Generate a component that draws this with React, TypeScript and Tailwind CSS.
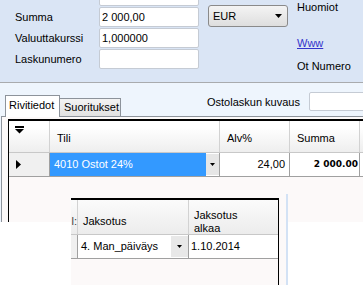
import React from "react";

const rows = [
    { label: "", value: "" },
    { label: "Summa", value: "2 000,00" },
    { label: "Valuuttakurssi", value: "1,000000" },
    { label: "Laskunumero", value: "" },
];

const DownArrow: React.FC<{ className?: string }> = ({ className }) => (
    <svg width="7" height="4" viewBox="0 0 7 4" className={className}>
        <path d="M0 0h7L3.5 4z" fill="#000" />
    </svg>
);

const App: React.FC = () => {
    return (
        <div className="relative w-[363px] h-[285px] overflow-hidden bg-white text-[11px] leading-[13px] text-black font-['Liberation_Sans',Arial,sans-serif]">
            {/* header form */}
            <div className="h-[83px] bg-[#dae5f5] border-b border-[#a9abae] flex overflow-hidden">
                <div className="flex flex-col gap-[1px] -mt-[14px]">
                    {rows.map((r, i) => (
                        <div key={i} className="flex items-center h-[20px]">
                            <span className="w-[99px] pl-[15px]">{r.label}</span>
                            <div className="w-[100px] h-[20px] bg-white border border-[#c5cbd4] rounded-[2px] pl-[2px] flex items-center">
                                {r.value}
                            </div>
                        </div>
                    ))}
                </div>
                <div className="ml-[9px] mt-[5px] w-[80px] h-[22px] rounded-[3px] border border-[#8a8a8a] bg-gradient-to-b from-[#f4f4f4] to-[#dedede] flex items-center justify-between pl-[4px] pr-[5px]">
                    <span>EUR</span>
                    <DownArrow />
                </div>
                <div className="ml-[9px] flex flex-col pt-[1px]">
                    <span>Huomiot</span>
                    <span className="mt-[23px] text-[#3333cc] underline">Www</span>
                    <span className="mt-[10px]">Ot Numero</span>
                </div>
            </div>

            {/* tabs + grid */}
            <div className="h-[139px] bg-[#eef5fd] overflow-hidden flex flex-col">
                <div className="h-[33px] flex shrink-0">
                    <div className="flex items-end pl-[5px]">
                        <div className="relative z-10 -mb-[1px] w-[55px] h-[22px] bg-white border-t border-l border-r border-[#8d939b] pl-[3px] pt-[3px]">
                            Rivitiedot
                        </div>
                        <div className="w-[61px] h-[18px] bg-gradient-to-b from-[#f3f3f3] to-[#e2e2e2] border-t border-r border-[#8d939b] pl-[4px] pt-[2px]">
                            Suoritukset
                        </div>
                    </div>
                    <div className="ml-[86px] mt-[9px] h-[19px] flex items-center">
                        <span className="w-[102px] pt-[2px]">Ostolaskun kuvaus</span>
                        <div className="w-[60px] h-[19px] bg-white border border-[#c5cbd4] rounded-[2px]" />
                    </div>
                </div>
                <div className="flex-1 ml-[1px] border-t border-l border-[#8d939b] bg-[#fcf9f9] pl-[6px] pt-[2px]">
                    <div className="h-full border-l border-t-2 border-black bg-[#fcf9f9]">
                        <div className="h-[32px] flex border-b border-[#c8c8c8] bg-gradient-to-b from-white from-20% to-[#eeeeee]">
                            <div className="w-[41px] border-r border-[#d2d2d2] pl-[6px] pt-[5px]">
                                <svg width="10" height="8" viewBox="0 0 10 8">
                                    <rect x="0" y="0" width="9" height="2" fill="#000" />
                                    <path d="M0 3h9L4.5 7.5z" fill="#000" />
                                </svg>
                            </div>
                            <div className="w-[170px] border-r border-[#d2d2d2] pl-[7px] flex items-end pb-[7px]">Tili</div>
                            <div className="w-[70px] border-r border-[#d2d2d2] pl-[7px] flex items-end pb-[7px]">Alv%</div>
                            <div className="w-[70px] border-r border-[#d2d2d2] pl-[7px] flex items-end pb-[7px]">Summa</div>
                            <div className="flex-1" />
                        </div>
                        <div className="h-[24px] flex border-b border-[#a0a0a0] bg-white">
                            <div className="w-[41px] border-r border-[#a0a0a0] bg-[#f0f0f0] pl-[7px] flex items-center">
                                <svg width="5" height="9" viewBox="0 0 5 9">
                                    <path d="M0 0l5 4.5L0 9z" fill="#000" />
                                </svg>
                            </div>
                            <div className="w-[170px] border-r border-[#a0a0a0] flex">
                                <div className="flex-1 bg-[#3399ff] text-white pl-[4px] flex items-center">4010 Ostot 24%</div>
                                <div className="w-[13px] my-[1px] bg-[#e6e6e6] flex items-center justify-center">
                                    <DownArrow className="w-[5px] h-[3px]" />
                                </div>
                            </div>
                            <div className="w-[70px] border-r border-[#a0a0a0] pr-[4px] flex items-center justify-end">24,00</div>
                            <div className="w-[70px] border-r border-[#a0a0a0] pr-[1px] flex items-center justify-end font-['DejaVu_Sans',sans-serif] font-bold text-[9px]">
                                2 000.00
                            </div>
                            <div className="flex-1" />
                        </div>
                    </div>
                </div>
            </div>

            {/* floating sub grid window */}
            <div className="absolute left-[71px] top-[194px] w-[217px] h-[91px] bg-[#fcf9f9] border-r-2 border-[#d3e2f5] pt-[4px]">
                <div className="w-[208px] h-full border-t-2 border-r border-black">
                    <div className="h-[35px] flex border-b border-[#c8c8c8] bg-gradient-to-b from-[#fbfbfb] to-[#ececec]">
                        <div className="w-[7px] border-r border-[#d2d2d2] overflow-hidden flex items-center justify-end pt-[9px] text-[#444]">l:</div>
                        <div className="w-[111px] border-r border-[#d2d2d2] pl-[5px] flex items-center pt-[9px]">Jaksotus</div>
                        <div className="flex-1 pl-[5px] flex items-center pt-[9px]">
                            Jaksotus
                            <br />
                            alkaa
                        </div>
                    </div>
                    <div className="h-[24px] flex border-b border-[#a0a0a0] bg-white">
                        <div className="w-[7px] border-r border-[#a0a0a0] bg-[#f0f0f0]" />
                        <div className="w-[111px] border-r border-[#a0a0a0] flex">
                            <div className="flex-1 pl-[3px] flex items-center">4. Man_päiväys</div>
                            <div className="w-[17px] my-[1px] bg-[#e8e8e8] flex items-center justify-center">
                                <DownArrow className="w-[5px] h-[3px]" />
                            </div>
                        </div>
                        <div className="flex-1 pl-[2px] flex items-center">1.10.2014</div>
                    </div>
                </div>
            </div>
        </div>
    );
};

export default App;
